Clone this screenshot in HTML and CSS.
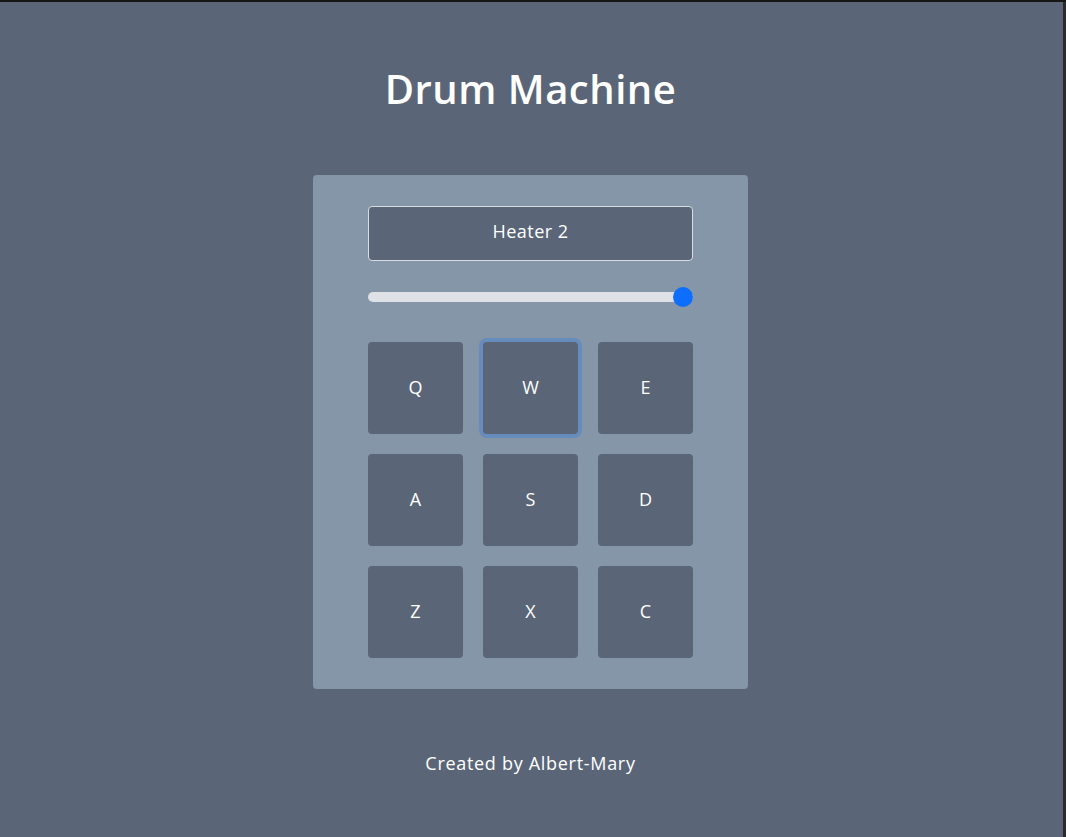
FILE: index.html
```html
<!DOCTYPE html>
<html lang="en">
<head>
<meta charset="utf-8">
<title>Drum Machine</title>
<link rel="stylesheet" href="styles.css">
</head>
<body>
<div class="screen">
  <main class="page">
    <h1 class="title">Drum Machine</h1>
    <section class="machine" id="drum-machine">
      <div class="display" id="display">Heater 2</div>
      <div class="volume">
        <input class="slider" type="range" min="0" max="1" step="0.01" value="1" aria-label="Volume">
      </div>
      <div class="pads">
        <button class="pad">Q</button>
        <button class="pad pad-focus">W</button>
        <button class="pad">E</button>
        <button class="pad">A</button>
        <button class="pad">S</button>
        <button class="pad">D</button>
        <button class="pad">Z</button>
        <button class="pad">X</button>
        <button class="pad">C</button>
      </div>
    </section>
    <footer class="credit">Created by Albert-Mary</footer>
  </main>
  <div class="edge"></div>
</div>
</body>
</html>
```
FILE: styles.css
```css
* { box-sizing: border-box; }
html, body { margin: 0; padding: 0; }
body {
  background: #5a6677;
  font-family: "Open Sans", "Noto Sans", sans-serif;
  color: #ffffff;
}
.screen {
  display: grid;
  grid-template-columns: 1fr 3px;
  min-height: 100vh;
  border-top: 2px solid #161616;
}
.edge { background: #2b2b2b; }
.page {
  display: flex;
  flex-direction: column;
  align-items: center;
  padding-right: 2px;
}
.title {
  margin: 60px 0 0;
  font-size: 40px;
  font-weight: 600;
  line-height: 54px;
  letter-spacing: 0.5px;
}
.machine {
  margin-top: 59px;
  width: 435px;
  background: #8496a8;
  border-radius: 4px;
  padding: 31px 55px 31px;
  display: flex;
  flex-direction: column;
}
.display {
  height: 55px;
  border: 1px solid #d9dde2;
  border-radius: 4px;
  background: #5a6677;
  display: flex;
  align-items: center;
  justify-content: center;
  padding-bottom: 6px;
  font-size: 18px;
  letter-spacing: 0.5px;
}
.volume {
  margin-top: 26px;
  height: 20px;
  display: flex;
  align-items: center;
}
.slider {
  -webkit-appearance: none;
  appearance: none;
  width: 100%;
  height: 20px;
  margin: 0;
  background: transparent;
}
.slider::-webkit-slider-runnable-track {
  height: 10px;
  background: #dee2e6;
  border-radius: 5px;
}
.slider::-webkit-slider-thumb {
  -webkit-appearance: none;
  width: 20px;
  height: 20px;
  margin-top: -5px;
  border-radius: 50%;
  background: #0d6efd;
  border: none;
}
.pads {
  margin-top: 35px;
  display: grid;
  grid-template-columns: repeat(3, 95px);
  grid-auto-rows: 92px;
  column-gap: 20px;
  row-gap: 20px;
}
.pad {
  border: none;
  border-radius: 4px;
  background: #5a6677;
  color: #ffffff;
  font-family: "Open Sans", "Noto Sans", sans-serif;
  font-size: 18px;
  padding: 0 0 2px;
}
.pad-focus {
  box-shadow: 0 0 0 4px #668cbd;
}
.credit {
  margin-top: 62px;
  font-size: 18px;
  line-height: 24px;
  letter-spacing: 0.7px;
}
```
